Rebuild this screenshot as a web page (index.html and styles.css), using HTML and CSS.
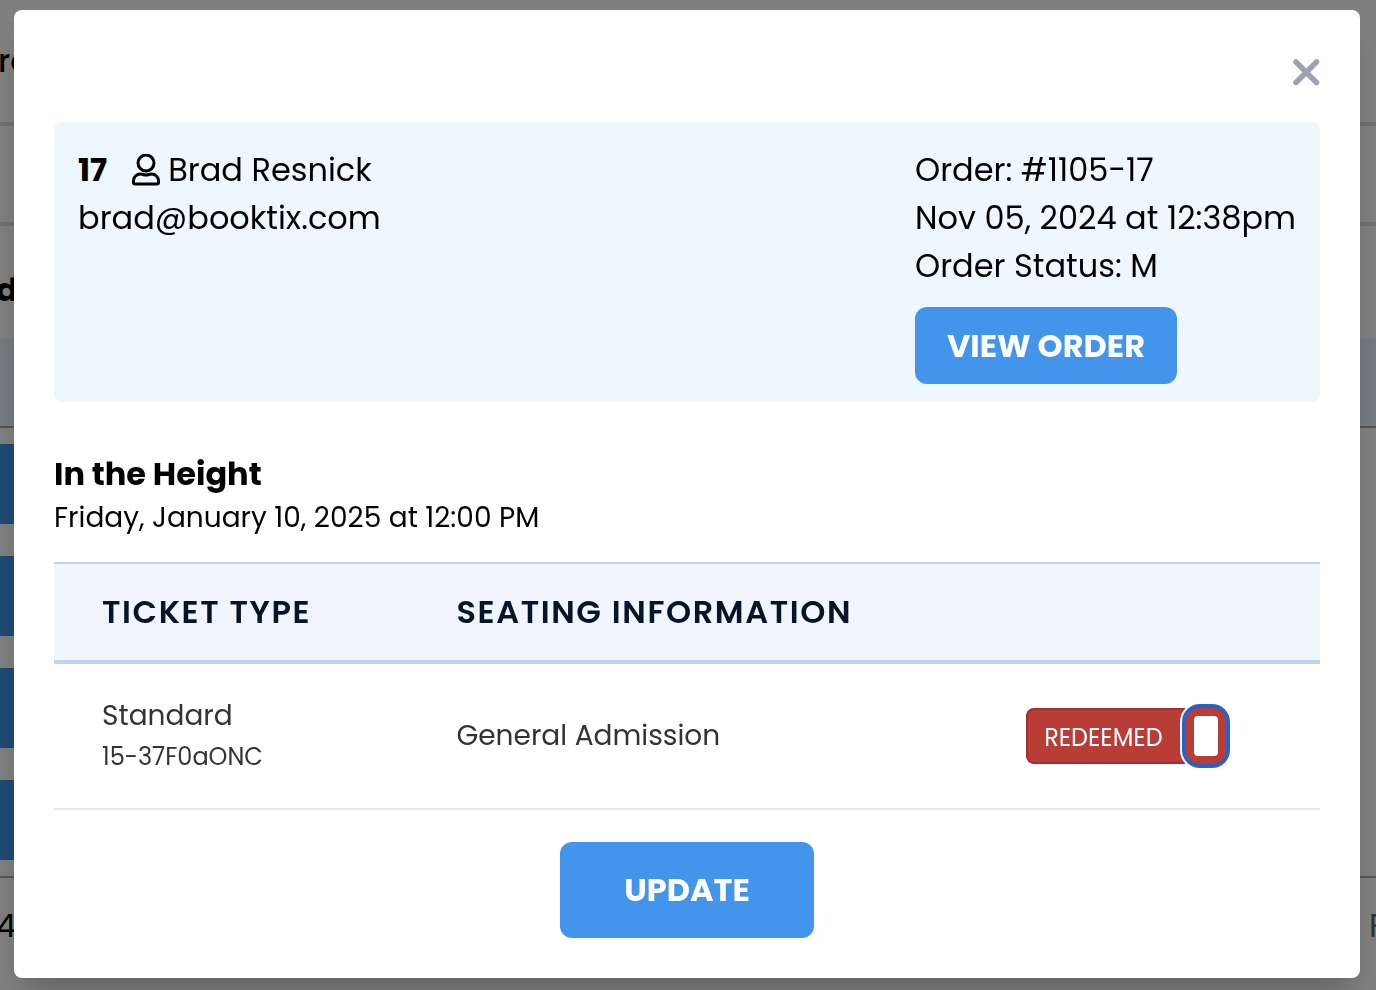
FILE: index.html
```html
<!DOCTYPE html>
<html lang="en">
<head>
    <meta charset="UTF-8">
    <meta name="viewport" content="width=device-width, initial-scale=1.0">
    <title>Ticket Details</title>
    <link rel="stylesheet" href="styles.css">
</head>
<body>
    <!-- Page behind the modal -->
    <div class="page" aria-hidden="true">
        <div class="page-top">ro</div>
        <div class="page-filter"></div>
        <div class="page-heading">d</div>
        <div class="page-band"></div>
        <div class="page-actions">
            <div class="page-action"></div>
            <div class="page-action"></div>
            <div class="page-action"></div>
            <div class="page-action"></div>
        </div>
        <div class="page-footer"><span>4</span><span class="page-end">F</span></div>
    </div>

    <div class="overlay">
        <div class="modal" role="dialog" aria-modal="true" aria-labelledby="eventTitle">
            <div class="modal-header">
                <button type="button" class="close-btn" aria-label="Close">
                    <svg width="28" height="28" viewBox="0 0 28 28" fill="none" stroke="currentColor" stroke-width="5.500" stroke-linecap="round">
                        <path d="M4 4l20.500 20.500M24.500 4l-20.500 20.500"/>
                    </svg>
                </button>
            </div>

            <div class="order-info">
                <div class="customer">
                    <div class="customer-name">
                        <strong>17</strong>
                        <svg class="user-icon" width="28" height="32" viewBox="0 0 28 32" fill="none" stroke="currentColor" stroke-width="3" stroke-linejoin="round">
                            <circle cx="14" cy="9" r="8"/>
                            <path d="M8.500 20c2 0 3 1 5.500 1s3.500-1 5.500-1c4 0 7 3 7 7v1.500c0 1-.5 1.500-1.500 1.500H3c-1 0-1.500-.5-1.500-1.500v-1.500c0-4 3-7 7-7z"/>
                        </svg>
                        <span>Brad Resnick</span>
                    </div>
                    <div>brad@booktix.com</div>
                </div>
                <div class="order">
                    <div>Order: #1105-17</div>
                    <div>Nov 05, 2024 at 12:38pm</div>
                    <div>Order Status: M</div>
                    <button type="button" class="btn view-btn">VIEW ORDER</button>
                </div>
            </div>

            <h2 class="event-title" id="eventTitle">In the Height</h2>
            <p class="event-date">Friday, January 10, 2025 at 12:00 PM</p>

            <table class="tickets">
                <thead>
                    <tr>
                        <th class="col-type">TICKET TYPE</th>
                        <th class="col-seat">SEATING INFORMATION</th>
                        <th></th>
                    </tr>
                </thead>
                <tbody>
                    <tr>
                        <td>
                            <div>Standard</div>
                            <div class="ticket-code">15-37F0aONC</div>
                        </td>
                        <td>General Admission</td>
                        <td>
                            <div class="redeem">
                                <button type="button" class="redeem-btn">REDEEMED</button>
                                <button type="button" class="redeem-toggle" aria-label="Toggle redeemed"><span></span></button>
                            </div>
                        </td>
                    </tr>
                </tbody>
            </table>

            <div class="modal-footer">
                <button type="button" class="btn update-btn">UPDATE</button>
            </div>
        </div>
    </div>
</body>
</html>
```
FILE: styles.css
```css
* {
    box-sizing: border-box;
}
body {
    margin: 0;
    min-height: 100vh;
    overflow: hidden;
    font-family: Poppins, Inter, sans-serif;
    font-size: 32px;
    line-height: 48px;
    color: #000;
    background: #fff;
}
button {
    font-family: inherit;
    border: none;
    cursor: pointer;
}

/* page behind */
.page {
    margin-left: -4px;
}
.page-top {
    height: 126px;
    padding: 37px 0 0 2px;
    font-weight: 500;
    border-bottom: 4px solid #dedede;
}
.page-filter {
    height: 100px;
    border-bottom: 4px solid #dedede;
}
.page-heading {
    height: 112px;
    padding-top: 40px;
    font-weight: bold;
}
.page-band {
    height: 90px;
    background: #e8f4fa;
    border-bottom: 2px solid #aaa;
}
.page-actions {
    display: flex;
    flex-direction: column;
    gap: 32px;
    padding: 16px 0;
    border-bottom: 2px solid #aaa;
}
.page-action {
    width: 200px;
    height: 80px;
    background: #4094e8;
}
.page-footer {
    display: flex;
    justify-content: space-between;
    height: 112px;
    padding-top: 24px;
    overflow: hidden;
}
.page-end {
    width: 8px;
    padding-left: 1px;
    overflow: hidden;
    color: #666;
}

/* modal */
.overlay {
    position: fixed;
    inset: 0;
    padding: 10px 16px 12px 14px;
    background: rgba(0, 0, 0, 0.5);
}
.modal {
    padding: 40px;
    background: #fff;
    border-radius: 8px;
    box-shadow: 0 20px 30px -10px rgba(0, 0, 0, 0.25);
}
.modal-header {
    display: flex;
    justify-content: flex-end;
    height: 44px;
    margin-bottom: 28px;
}
.close-btn {
    display: flex;
    align-items: center;
    padding: 0;
    color: #9ca3b0;
    background: none;
}
.order-info {
    display: flex;
    justify-content: space-between;
    padding: 24px 24px 18px;
    background: #eef6fe;
    border-radius: 8px;
}
.customer-name {
    display: flex;
    align-items: center;
}
.user-icon {
    margin: 0 8px 0 25px;
}
.order {
    width: 381px;
    white-space: nowrap;
}
.btn {
    color: #fff;
    background: #4295eb;
    font-size: 32px;
    font-weight: bold;
    line-height: 48px;
    border-radius: 12px;
}
.view-btn {
    display: block;
    min-width: 262px;
    min-height: 77px;
    margin-top: 17px;
    padding: 14px 24px;
}
.event-title {
    margin: 48px 0 0;
    font-size: 32px;
    line-height: 48px;
}
.event-date {
    margin: 0 0 24px;
    font-size: 28px;
    line-height: 40px;
}
.tickets {
    width: 100%;
    table-layout: fixed;
    border-collapse: separate;
    border-spacing: 0;
}
.tickets th {
    height: 102px;
    padding: 0 0 0 48px;
    text-align: left;
    font-size: 32px;
    font-weight: 600;
    letter-spacing: 0.05em;
    white-space: nowrap;
    color: #071528;
    background: #f0f5fe;
    border-top: 2px solid #c3d5ec;
    border-bottom: 4px solid #c3d5ec;
}
.tickets .col-type {
    width: 28%;
}
.tickets .col-seat {
    width: 45%;
}
.tickets td {
    height: 146px;
    padding: 0 0 0 48px;
    font-size: 28px;
    line-height: 42px;
    color: #333;
    border-bottom: 2px solid #e8e8e8;
}
.tickets .ticket-code {
    font-size: 24px;
    line-height: 40px;
}
.redeem {
    display: flex;
}
.redeem-btn {
    width: 160px;
    height: 56px;
    padding: 2px 0 0 16px;
    text-align: left;
    font-size: 24px;
    color: #fff;
    background: #b93d36;
    border: 2px solid #9c322c;
    border-right: none;
    border-radius: 8px 0 0 8px;
}
.redeem-toggle {
    display: flex;
    align-items: center;
    justify-content: center;
    width: 40px;
    height: 56px;
    padding: 0;
    background: #b93d36;
    border-radius: 14px;
    box-shadow: 0 0 0 4px #2563c9, 0 0 0 6px #fff;
}
.redeem-toggle span {
    width: 24px;
    height: 40px;
    background: #fff;
    border-radius: 4px;
}
.modal-footer {
    display: flex;
    justify-content: center;
    margin-top: 32px;
}
.update-btn {
    min-width: 254px;
    padding: 24px 64px;
}
```
